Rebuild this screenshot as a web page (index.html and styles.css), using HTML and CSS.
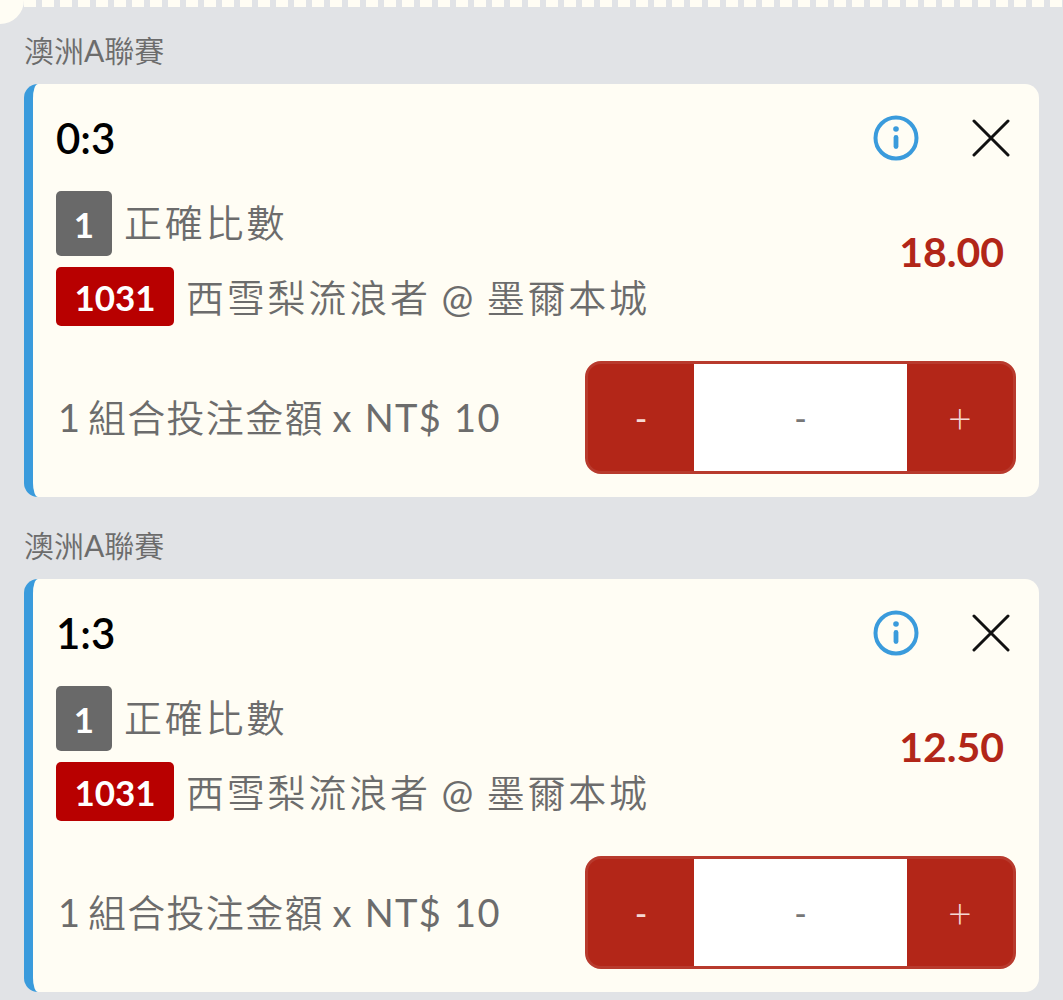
FILE: index.html
```html
<!DOCTYPE html>
<html lang="zh-Hant">
<head>
<meta charset="utf-8">
<title>投注單</title>
<link rel="stylesheet" href="styles.css">
</head>
<body>
<div class="ticket-edge"><span class="notch"></span></div>
<main class="list">
  <section class="group">
    <h2 class="league">澳洲<span class="latin">A</span>聯賽</h2>
    <article class="card">
      <div class="top">
        <strong class="score">0:3</strong>
        <div class="actions">
          <svg class="info" viewBox="0 0 46 46" aria-hidden="true"><circle cx="23" cy="23" r="20.5" fill="none" stroke="#3a9bdc" stroke-width="4"/><circle cx="23" cy="14" r="2.8" fill="#3a9bdc"/><rect x="20.6" y="20" width="4.8" height="14" rx="2.4" fill="#3a9bdc"/></svg>
          <svg class="close" viewBox="0 0 38 38" aria-hidden="true"><path d="M2 2 L36 36 M36 2 L2 36" stroke="#111" stroke-width="3" stroke-linecap="round"/></svg>
        </div>
      </div>
      <div class="middle">
        <div class="details">
          <div class="row"><span class="badge grey">1</span><span class="text">正確比數</span></div>
          <div class="row"><span class="badge red">1031</span><span class="text">西雪梨流浪者 <span class="latin">@</span> 墨爾本城</span></div>
        </div>
        <div class="odds">18.00</div>
      </div>
      <div class="bottom">
        <div class="stake"><span class="latin">1</span> 組合投注金額 <span class="latin tail">x NT$ 10</span></div>
        <div class="stepper"><span class="step minus">-</span><span class="value">-</span><span class="step plus">+</span></div>
      </div>
    </article>
  </section>
  <section class="group">
    <h2 class="league">澳洲<span class="latin">A</span>聯賽</h2>
    <article class="card">
      <div class="top">
        <strong class="score">1:3</strong>
        <div class="actions">
          <svg class="info" viewBox="0 0 46 46" aria-hidden="true"><circle cx="23" cy="23" r="20.5" fill="none" stroke="#3a9bdc" stroke-width="4"/><circle cx="23" cy="14" r="2.8" fill="#3a9bdc"/><rect x="20.6" y="20" width="4.8" height="14" rx="2.4" fill="#3a9bdc"/></svg>
          <svg class="close" viewBox="0 0 38 38" aria-hidden="true"><path d="M2 2 L36 36 M36 2 L2 36" stroke="#111" stroke-width="3" stroke-linecap="round"/></svg>
        </div>
      </div>
      <div class="middle">
        <div class="details">
          <div class="row"><span class="badge grey">1</span><span class="text">正確比數</span></div>
          <div class="row"><span class="badge red">1031</span><span class="text">西雪梨流浪者 <span class="latin">@</span> 墨爾本城</span></div>
        </div>
        <div class="odds">12.50</div>
      </div>
      <div class="bottom">
        <div class="stake"><span class="latin">1</span> 組合投注金額 <span class="latin tail">x NT$ 10</span></div>
        <div class="stepper"><span class="step minus">-</span><span class="value">-</span><span class="step plus">+</span></div>
      </div>
    </article>
  </section>
</main>
</body>
</html>
```
FILE: styles.css
```css
* { box-sizing: border-box; }
html, body { margin: 0; padding: 0; }
body {
  width: 1063px;
  height: 1000px;
  overflow: hidden;
  background: #e1e3e6;
  font-family: Lato, "Noto Sans CJK TC", sans-serif;
}
.ticket-edge {
  position: relative;
  height: 32px;
}
.ticket-edge::before {
  content: "";
  display: block;
  height: 7px;
  background: repeating-linear-gradient(90deg, #fffdf4 0 12px, #e1e3e6 12px 18px);
  background-position-x: 6px;
}
.notch {
  position: absolute;
  left: -24px;
  top: -24px;
  width: 48px;
  height: 48px;
  border-radius: 50%;
  background: #fffdf4;
}
.list {
  padding: 0 24px;
  display: flex;
  flex-direction: column;
}
.group { display: flex; flex-direction: column; }
.latin { font-weight: 400; }
.league {
  margin: 0;
  height: 52px;
  font-size: 30px;
  line-height: 36px;
  font-weight: 350;
  color: #6c6c6c;
}
.group + .group { margin-top: 30px; }
.card {
  height: 413px;
  background: #fffdf4;
  border-left: 9px solid #3a9bdc;
  border-radius: 14px;
  padding: 0 23px 0 23px;
  display: flex;
  flex-direction: column;
}
.top {
  height: 107px;
  display: flex;
  justify-content: space-between;
  align-items: center;
  padding-top: 1px;
}
.score {
  font-size: 42px;
  font-weight: 600;
  color: #000;
  line-height: 46px;
}
.actions {
  display: flex;
  align-items: center;
  gap: 53px;
  padding-right: 6px;
}
.info { width: 46px; height: 46px; display: block; }
.close { width: 38px; height: 38px; display: block; }
.middle {
  display: flex;
  justify-content: space-between;
  align-items: center;
  padding-right: 12px;
}
.details {
  display: flex;
  flex-direction: column;
  gap: 11px;
}
.row {
  display: flex;
  align-items: center;
  gap: 12px;
}
.badge {
  display: flex;
  align-items: center;
  justify-content: center;
  border-radius: 5px;
  color: #fff;
  font-weight: 700;
  font-size: 35px;
}
.grey { width: 56px; height: 65px; background: #696969; }
.red { width: 118px; height: 59px; background: #b80000; }
.text {
  font-size: 38px;
  line-height: 48px;
  font-weight: 350;
  letter-spacing: 2.8px;
  word-spacing: -2.5px;
  color: #6c6c6c;
}
.grey + .text { margin-bottom: 4px; }
.odds {
  font-size: 41px;
  font-weight: 700;
  color: #b22618;
  margin-bottom: 15px;
}
.bottom {
  display: flex;
  justify-content: space-between;
  align-items: center;
  margin-top: 35px;
}
.stake {
  font-size: 38px;
  line-height: 48px;
  font-weight: 350;
  color: #6c6c6c;
  padding-left: 2px;
  margin-bottom: 2px;
  letter-spacing: 1.3px;
  word-spacing: -5px;
}
.tail {
  margin-left: 2px;
  word-spacing: 1px;
}
.stepper {
  width: 431px;
  height: 113px;
  background: #b32618;
  border: 3px solid #b83a2d;
  border-radius: 16px;
  display: flex;
  overflow: hidden;
}
.step {
  width: 106px;
  display: flex;
  align-items: center;
  justify-content: center;
  font-size: 34px;
  font-weight: 400;
  color: #f5d8d3;
}
.plus { font-size: 41px; font-weight: 300; }
.value {
  flex: 1;
  background: #fff;
  display: flex;
  align-items: center;
  justify-content: center;
  color: #777;
  font-size: 34px;
}
```
